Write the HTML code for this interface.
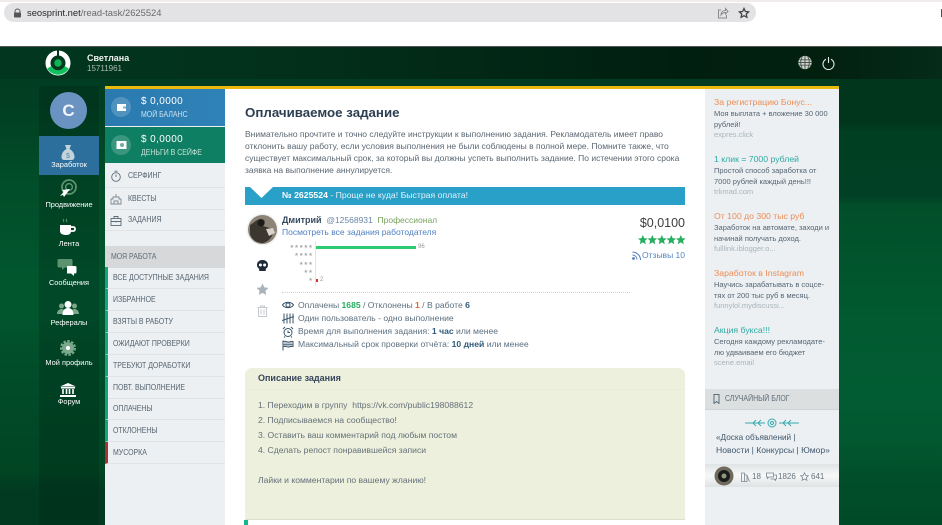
<!DOCTYPE html>
<html lang="ru"><head><meta charset="utf-8"><title>Оплачиваемое задание</title>
<style>
html,body{margin:0;padding:0}
body{width:942px;height:525px;overflow:hidden;position:relative;background:#fff;font-family:"Liberation Sans","DejaVu Sans",sans-serif;color:#566573}
#p{position:absolute;left:0;top:0;width:942px;height:525px;overflow:hidden;filter:blur(.3px)}
.a{position:absolute;white-space:nowrap}
.nav{position:absolute;left:39px;width:60px;text-align:center;color:#fff;font-size:7.400px;line-height:10px}
.nav svg{position:absolute;left:18px;top:-24px}
.m{position:absolute;left:105px;width:120px;height:21px;border-bottom:1px solid #e0e4e6;font-size:8px;line-height:21px;color:#55626f}
.m span{position:absolute;left:8px;white-space:nowrap;transform:scaleX(.87);transform-origin:0 50%}
.w{border-left:3px solid #12a57f;width:117px}
.w span{left:5px}
.sx{transform:scaleX(.87);transform-origin:0 50%}
.ic{position:absolute;left:282px}
.ad{position:absolute;left:714px;width:120px}
.ad b{display:block;font-weight:normal;font-size:8.700px;line-height:11px;white-space:nowrap}
.ad p{margin:1px 0 0;font-size:7.500px;line-height:10.500px;color:#566573;white-space:nowrap}
.ad i{display:block;font-style:normal;font-size:7.500px;line-height:10.500px;color:#aab4bb}
.o{color:#ee8c55}.t{color:#2fa9a5}
.l{position:absolute;left:258px;font-size:8.600px;line-height:11px;color:#65707a;white-space:nowrap}
.r{position:absolute;left:298px;font-size:8.600px;line-height:11px;color:#5c7080;white-space:nowrap}
.r b{color:#2c5a78}
</style></head><body><div id="p">

<!-- browser chrome -->
<div class="a" style="left:0;top:0;width:942px;height:2px;background:#f1ecec"></div>
<div class="a" style="left:4px;top:3px;width:752px;height:19px;border-radius:10px;background:#e3e3e5"></div>
<svg class="a" style="left:13px;top:8px" width="9" height="10" viewBox="0 0 9 10"><path d="M2 5V3.500a2.500 2.500 0 0 1 5 0V5" fill="none" stroke="#555" stroke-width="1"/><rect x="1" y="4.500" width="7" height="5" rx="1" fill="#555"/></svg>
<div class="a" style="left:27px;top:6px;font-size:9.400px;line-height:14px;color:#6a6a6e"><span style="color:#26282b">seosprint.net</span>/read-task/2625524</div>
<svg class="a" style="left:717px;top:7px" width="12" height="12" viewBox="0 0 12 12" fill="none" stroke="#8b8b8e" stroke-width="1"><path d="M4 3H1.500v8h8V8M4 8c0-3 2-4.500 4.500-4.500V1.500L11 4.500 8.500 7V5.500C6.500 5.500 5 6.500 4 8z"/></svg>
<svg class="a" style="left:738px;top:7px" width="12" height="12" viewBox="0 0 24 24" fill="none" stroke="#444" stroke-width="2.600"><path d="M12 3l2.800 6 6.500.8-4.800 4.400 1.300 6.400-5.800-3.200-5.800 3.200 1.300-6.400L2.700 9.800 9.200 9z"/></svg>
<div class="a" style="left:941px;top:9px;width:1px;height:8px;background:#555"></div>

<!-- background strips -->
<div class="a" style="left:0;top:46px;width:105px;height:479px;background:linear-gradient(180deg,#013d21 33px,#013f22 60px,#014d29 130px,#01562e 230px,#01562e 270px,#014e2a 310px,#014826 380px,#014523 425px,#013a20 445px,#013a20 479px)"></div>
<div class="a" style="left:105px;top:46px;width:734px;height:479px;background:#013b20"></div>
<div class="a" style="left:839px;top:46px;width:103px;height:479px;background:linear-gradient(180deg,#01351c 33px,#01351c 75px,#013f22 85px,#014024 150px,#014f2a 160px,#01532c 200px,#015a30 275px,#025c33 350px,#02572f 400px,#014e2a 430px,#014a28 479px)"></div>
<div class="a" style="left:0;top:46px;width:942px;height:33px;background:linear-gradient(90deg,#02371f,#02301b 30%,#011f11 72%,#03200f 88%,#042c18);border-top:1px solid #555;box-sizing:border-box"></div>

<!-- logo -->
<svg class="a" style="left:45px;top:50px" width="26" height="26" viewBox="0 0 26 26">
<circle cx="13" cy="13" r="10" fill="none" stroke="#fff" stroke-width="5"/>
<path d="M2.200 18.500A12.500 12.500 0 0 0 23.800 18.500L19.500 16A7.500 7.500 0 0 1 6.500 16Z" fill="#0fc25f"/>
<rect x="12" y="0" width="2" height="6" fill="#03391f"/>
<circle cx="13" cy="13" r="7.200" fill="#03391f"/>
<circle cx="13" cy="13" r="3.700" fill="#0fb456"/>
</svg>
<div class="a" style="left:87px;top:52px;font-size:9px;line-height:12px;font-weight:bold;color:#f0f2f0">Светлана</div>
<div class="a" style="left:87px;top:63px;font-size:8px;line-height:11px;color:#a9bcae">15711961</div>

<!-- header right icons -->
<svg class="a" style="left:798px;top:55px" width="14" height="15" viewBox="0 0 13 14"><circle cx="6.500" cy="7" r="6.200" fill="#cfd4cf"/><path d="M1 4.500h11M.5 7h12M1 9.500h11M4 1.500c-2 3-2 8 0 11M9 1.500c2 3 2 8 0 11M6.500 1v12" stroke="#49554c" stroke-width=".9" fill="none"/></svg>
<svg class="a" style="left:822px;top:56px" width="13" height="14" viewBox="0 0 13 14" fill="none" stroke="#e8ece8" stroke-width="1.100"><path d="M4 3.200a5.500 5.500 0 1 0 5 0M6.500 1v6"/></svg>

<!-- left sidebar -->
<div class="a" style="left:39px;top:86px;width:60px;height:439px;background:rgba(0,30,15,.24)"></div>
<div class="a" style="left:50px;top:92px;width:37px;height:37px;border-radius:50%;background:#6b93c2;color:#f2f5fa;font-size:17px;line-height:37px;text-align:center;font-weight:bold">C</div>
<div class="a" style="left:39px;top:136px;width:60px;height:39px;background:#2c6e9c"></div>

<div class="nav" style="top:160px"><svg width="22" height="22" viewBox="0 0 22 22" style="top:-18px"><path d="M8 3h6l-1.500 4c3 1.500 5 4.500 5 8 0 2-1.500 3-3 3H7.500c-1.500 0-3-1-3-3 0-3.500 2-6.500 5-8z" fill="#c3d4dd"/><text x="11" y="16" font-size="7" text-anchor="middle" fill="#5b8aa8" font-family="Liberation Sans">$</text></svg>Заработок</div>

<div class="nav" style="top:200px"><svg width="22" height="22" viewBox="0 0 22 22" style="top:-22px"><circle cx="12" cy="9" r="7" fill="none" stroke="#5c9270" stroke-width="1.800"/><circle cx="12" cy="9" r="3.400" fill="none" stroke="#5c9270" stroke-width="1.500"/><path d="M3 18l3-1 1 2 6-8-8 1 1.500 2z" fill="#fff"/></svg>Продвижение</div>

<div class="nav" style="top:239px"><svg width="22" height="24" viewBox="0 0 22 24" style="top:-21px"><path d="M6 1c1 1 0 2 1 3M9 1c1 1 0 2 1 3" stroke="#5c9270" stroke-width="1" fill="none"/><path d="M3 7h11v6c0 3-2 4-5 4s-6-1-6-4z" fill="#fff"/><path d="M14 9h2.500c2 0 2 4 0 4H14" stroke="#fff" stroke-width="1.800" fill="none"/></svg>Лента</div>

<div class="nav" style="top:278px"><svg width="22" height="22" viewBox="0 0 22 22" style="top:-21px"><path d="M2 2h12c1 0 1.500 .5 1.500 1.500V9c0 1-.5 1.500-1.500 1.500H8L5 13v-2.500H2C1 10.500.5 10 .5 9V3.500C.5 2.500 1 2 2 2z" fill="#5c9270"/><path d="M10 9h8c1 0 1.500 .5 1.500 1.500V15c0 1-.5 1.500-1.500 1.500h-1V19l-3-2.500h-4z" fill="#fff"/></svg>Сообщения</div>

<div class="nav" style="top:318px"><svg width="22" height="18" viewBox="0 0 22 18" style="top:-18px"><circle cx="4.500" cy="6" r="2.500" fill="#7aa88a"/><circle cx="17.500" cy="6" r="2.500" fill="#7aa88a"/><path d="M0 14c0-3 2-5 4.500-5s3 1 3 5zM22 14c0-3-2-5-4.500-5s-3 1-3 5z" fill="#7aa88a"/><circle cx="11" cy="4.500" r="3.500" fill="#fff"/><path d="M5.500 15c0-5 2.500-7 5.500-7s5.500 2 5.500 7z" fill="#fff"/></svg>Рефералы</div>

<div class="nav" style="top:358px"><svg width="22" height="18" viewBox="0 0 22 18" style="top:-18px"><circle cx="11" cy="8" r="6" fill="#7aa88a"/><circle cx="11" cy="8" r="7" fill="none" stroke="#7aa88a" stroke-width="2" stroke-dasharray="2.500 1.500"/><circle cx="11" cy="8" r="2" fill="#fff"/></svg>Мой профиль</div>

<div class="nav" style="top:397px"><svg width="22" height="16" viewBox="0 0 22 16" style="top:-15px"><path d="M11 1 19 4.500H3z" fill="#fff"/><rect x="4" y="5" width="14" height="1.500" fill="#fff"/><path d="M6 7v5M9.500 7v5M12.500 7v5M16 7v5" stroke="#fff" stroke-width="1.600"/><rect x="3" y="13" width="16" height="2" fill="#fff"/></svg>Форум</div>

<!-- top yellow bar -->
<div class="a" style="left:105px;top:86px;width:734px;height:3px;background:#e9b90d"></div>

<!-- left column -->
<div class="a" style="left:105px;top:89px;width:120px;height:436px;background:#ecf0f2"></div>
<div class="a" style="left:105px;top:89px;width:120px;height:37px;background:linear-gradient(90deg,#2a7ab0,#2f82b7)"></div>
<div class="a" style="left:105px;top:127px;width:120px;height:36px;background:#0f7f63"></div>
<div class="a" style="left:111px;top:97px;width:20px;height:20px;border-radius:50%;background:rgba(255,255,255,.18)"></div>
<div class="a" style="left:111px;top:135px;width:20px;height:20px;border-radius:50%;background:rgba(255,255,255,.18)"></div>
<svg class="a" style="left:116px;top:102px" width="11" height="10" viewBox="0 0 11 10"><path d="M1 2h9v7H1z" fill="#fff"/><rect x="7" y="4.500" width="3" height="2" fill="#7fb0d0"/></svg>
<svg class="a" style="left:116px;top:140px" width="11" height="10" viewBox="0 0 11 10"><rect x=".5" y="1" width="10" height="8" fill="#fff"/><circle cx="6" cy="5" r="2" fill="#73ae9b"/></svg>
<div class="a" style="left:141px;top:95px;font-size:10px;line-height:13px;color:#fff;letter-spacing:.4px">$ 0,0000</div>
<div class="a sx" style="left:141px;top:110px;font-size:8px;line-height:10px;color:#cfe2ef">МОЙ БАЛАНС</div>
<div class="a" style="left:141px;top:133px;font-size:10px;line-height:13px;color:#fff;letter-spacing:.4px">$ 0,0000</div>
<div class="a sx" style="left:141px;top:148px;font-size:8px;line-height:10px;color:#c7e3da">ДЕНЬГИ В СЕЙФЕ</div>

<div class="m" style="top:165px;height:22px;line-height:22px"><span style="left:23px">СЕРФИНГ</span></div>
<div class="m" style="top:188px;height:21px;line-height:21px"><span style="left:23px">КВЕСТЫ</span></div>
<div class="m" style="top:210px;height:20px;line-height:20px"><span style="left:23px">ЗАДАНИЯ</span></div>
<svg class="a" style="left:110px;top:170px" width="12" height="12" viewBox="0 0 12 12" fill="none" stroke="#5d6b78" stroke-width=".9"><circle cx="6" cy="7" r="4.300"/><path d="M4.500 1.200h3M6 7V4.500"/></svg>
<svg class="a" style="left:110px;top:193px" width="12" height="12" viewBox="0 0 12 12" fill="none" stroke="#7d8a95" stroke-width=".9"><path d="M1 11V6h2V4h6v2h2v5zM4 11V8h4v3M6 4V1"/></svg>
<svg class="a" style="left:110px;top:215px" width="12" height="12" viewBox="0 0 12 12" fill="none" stroke="#5d6b78" stroke-width=".9"><rect x="1" y="3.500" width="10" height="7"/><path d="M4 3.500V1.500h4v2M1 6.500h10M6 6v1.500"/></svg>

<div class="a" style="left:105px;top:246px;width:120px;height:22px;background:#d6d8d9"></div>
<div class="a sx" style="left:111px;top:246px;font-size:8px;line-height:22px;color:#5d6b78">МОЯ РАБОТА</div>

<div class="m w" style="top:267px"><span>ВСЕ ДОСТУПНЫЕ ЗАДАНИЯ</span></div>
<div class="m w" style="top:289px"><span>ИЗБРАННОЕ</span></div>
<div class="m w" style="top:311px"><span>ВЗЯТЫ В РАБОТУ</span></div>
<div class="m w" style="top:333px"><span>ОЖИДАЮТ ПРОВЕРКИ</span></div>
<div class="m w" style="top:355px"><span>ТРЕБУЮТ ДОРАБОТКИ</span></div>
<div class="m w" style="top:377px"><span>ПОВТ. ВЫПОЛНЕНИЕ</span></div>
<div class="m w" style="top:398px"><span>ОПЛАЧЕНЫ</span></div>
<div class="m w" style="top:420px"><span>ОТКЛОНЕНЫ</span></div>
<div class="m w" style="top:442px;border-left-color:#a8322e"><span>МУСОРКА</span></div>

<!-- main -->
<div class="a" style="left:225px;top:89px;width:480px;height:436px;background:#fff"></div>
<div class="a" style="left:245px;top:104px;font-size:13.300px;line-height:17px;font-weight:bold;color:#2c3e50">Оплачиваемое задание</div>
<div class="a" style="left:245px;top:128px;font-size:8.500px;line-height:12px;color:#5a6773">Внимательно прочтите и точно следуйте инструкции к выполнению задания. Рекламодатель имеет право<br>отклонить вашу работу, если условия выполнения не были соблюдены в полной мере. Помните также, что<br>существует максимальный срок, за который вы должны успеть выполнить задание. По истечении этого срока<br>заявка на выполнение аннулируется.</div>

<div class="a" style="left:245px;top:187px;width:440px;height:18px;background:#29a0c8"></div>
<svg class="a" style="left:250px;top:187px" width="23" height="11" viewBox="0 0 23 11"><path d="M0 0h23L11.500 11z" fill="#fff"/></svg>
<div class="a" style="left:282px;top:189px;font-size:8.700px;line-height:12px;color:#e3f3f9"><b style="color:#fff">№ 2625524</b> - Проще не куда! Быстрая оплата!</div>

<!-- avatar -->
<svg class="a" style="left:246px;top:213px" width="33" height="33" viewBox="0 0 33 33"><circle cx="16.500" cy="16.500" r="16" fill="#f1f1f1"/><circle cx="16.500" cy="16.500" r="14.500" fill="#8d8377"/><path d="M4 12c4-2 8-7 12-6s3 5 1 7l10 3c1 6-3 12-10 14-6 0-11-3-13-9z" fill="#3c3630"/><circle cx="15" cy="10" r="3.500" fill="#1f1b18"/><path d="M20 16l7-1 2 5-6 3z" fill="#d9d3c9"/></svg>

<div class="a" style="left:282px;top:214px;font-size:8.500px;line-height:12px"><b style="color:#34495e;font-size:9px">Дмитрий</b> &nbsp;<span style="color:#6a86a8">@12568931</span> &nbsp;<span style="color:#78a25c">Профессионал</span></div>
<div class="a" style="left:282px;top:226px;font-size:8.500px;line-height:12px;color:#4f7fc0">Посмотреть все задания работодателя</div>

<!-- rating chart -->
<div class="a" style="left:315px;top:241px;width:1px;height:45px;background:#e4e4e4"></div>
<div class="a" style="left:283px;top:243px;width:30px;text-align:right;font-size:5px;line-height:8.300px;color:#a6a6a6;letter-spacing:.2px">★★★★★<br>★★★★<br>★★★<br>★★<br>★</div>
<div class="a" style="left:316px;top:246px;width:100px;height:3px;background:#2ecc71"></div>
<div class="a" style="left:418px;top:244px;font-size:6px;line-height:7px;color:#999">96</div>
<div class="a" style="left:316px;top:279px;width:2px;height:3px;background:#d9342b"></div>
<div class="a" style="left:320px;top:277px;font-size:6px;line-height:7px;color:#999">2</div>

<!-- side action icons -->
<svg class="a" style="left:256px;top:259px" width="13" height="13" viewBox="0 0 13 13"><path d="M6.500 1C3 1 1 3.200 1 6c0 2 1 3 2.200 3.700V12h6.600V9.700C11 9 12 8 12 6c0-2.800-2-5-5.500-5z" fill="#1e2a38"/><circle cx="4.400" cy="6" r="1.500" fill="#fff"/><circle cx="8.600" cy="6" r="1.500" fill="#fff"/></svg>
<svg class="a" style="left:256px;top:283px" width="13" height="13" viewBox="0 0 24 24"><path d="M12 1l3.400 7 7.600 1-5.500 5.300L18.800 22 12 18.200 5.200 22l1.300-7.700L1 9l7.600-1z" fill="#a9b3ba"/></svg>
<svg class="a" style="left:257px;top:305px" width="11" height="12" viewBox="0 0 11 12" fill="none" stroke="#c3c9ce" stroke-width="1"><path d="M.5 2.500h10M3.500 2.500V1h4v1.500M1.500 2.500V11.500h8V2.500M4 4.500v5M7 4.500v5"/></svg>

<div class="a" style="left:282px;top:292px;width:348px;border-top:1px dotted #cfd3d6"></div>

<!-- stats -->
<svg class="ic" style="top:300px" width="12" height="10" viewBox="0 0 12 10" fill="none" stroke="#3a566c" stroke-width="1.100"><path d="M.5 5C2.500 1.500 9.500 1.500 11.500 5 9.500 8.500 2.500 8.500.5 5z"/><circle cx="6" cy="5" r="2"/></svg>
<svg class="ic" style="top:313px" width="12" height="11" viewBox="0 0 12 11" fill="none" stroke="#3a566c" stroke-width="1"><path d="M2 .5v10M5 .5v10M8 .5v10M11 .5v10M0 7.500 12 3.500"/></svg>
<svg class="ic" style="top:326px" width="12" height="12" viewBox="0 0 12 12" fill="none" stroke="#3a566c" stroke-width="1"><circle cx="6" cy="6.500" r="4"/><path d="M6 4.500v2h2M1 3l2-2M11 3 9 1M3 10.500l-1 1M9 10.500l1 1"/></svg>
<svg class="ic" style="top:340px" width="12" height="11" viewBox="0 0 12 11" fill="none" stroke="#3a566c" stroke-width="1"><path d="M1 .5v10M1 1.500c3-1 4 1 6 .5s2-1 4-.5v5c-2-.5-2 0-4 .5s-3-1.500-6-.5z"/><path d="M3 2v5M5 2v5M7 2v5M9 2v5M1 4.300h10" stroke-width=".7"/></svg>

<div class="r" style="top:300px">Оплачены <b style="color:#27ae60">1685</b> / Отклонены <b style="color:#e4683a">1</b> / В работе <b>6</b></div>
<div class="r" style="top:313px">Один пользователь - одно выполнение</div>
<div class="r" style="top:326px">Время для выполнения задания: <b>1 час</b> или менее</div>
<div class="r" style="top:339px">Максимальный срок проверки отчёта: <b>10 дней</b> или менее</div>

<!-- price -->
<div class="a" style="right:257px;top:215px;font-size:12.500px;line-height:17px;color:#3d3d3d">$0,0100</div>
<svg class="a" style="left:638px;top:235px" width="48" height="10" viewBox="0 0 48 10" fill="#27ae60"><path d="M4.800 0l1.400 3.200 3.400.3-2.600 2.300.8 3.400-3-1.800-3 1.800.8-3.400L0 3.500l3.400-.3z"/><path transform="translate(9.500)" d="M4.800 0l1.400 3.200 3.400.3-2.600 2.300.8 3.400-3-1.800-3 1.800.8-3.400L0 3.500l3.400-.3z"/><path transform="translate(19)" d="M4.800 0l1.400 3.200 3.400.3-2.600 2.300.8 3.400-3-1.800-3 1.800.8-3.400L0 3.500l3.400-.3z"/><path transform="translate(28.500)" d="M4.800 0l1.400 3.200 3.400.3-2.600 2.300.8 3.400-3-1.800-3 1.800.8-3.400L0 3.500l3.400-.3z"/><path transform="translate(38)" d="M4.800 0l1.400 3.200 3.400.3-2.600 2.300.8 3.400-3-1.800-3 1.800.8-3.400L0 3.500l3.400-.3z"/></svg>
<svg class="a" style="left:632px;top:251px" width="9" height="9" viewBox="0 0 9 9" fill="none" stroke="#4f7fc0" stroke-width="1"><circle cx="1.500" cy="7.500" r=".9" fill="#4f7fc0"/><path d="M.5 4a4.500 4.500 0 0 1 4.500 4.500M.5 1a8 8 0 0 1 8 8"/></svg>
<div class="a" style="right:257px;top:250px;font-size:8.500px;line-height:11px;color:#5686c4">Отзывы 10</div>

<!-- description -->
<div class="a" style="left:245px;top:368px;width:440px;height:151px;border-radius:7px 7px 0 0;background:#edf0dc"></div>
<div class="a" style="left:245px;top:389px;width:440px;height:1px;background:#e9ecd9"></div>
<div class="a" style="left:258px;top:373px;font-size:9px;line-height:11px;font-weight:bold;color:#36455a">Описание задания</div>
<div class="l" style="top:400px">1. Переходим в группу &nbsp;https://vk.com/public198088612</div>
<div class="l" style="top:415px">2. Подписываемся на сообщество!</div>
<div class="l" style="top:430px">3. Оставить ваш комментарий под любым постом</div>
<div class="l" style="top:445px">4. Сделать репост понравившейся записи</div>
<div class="l" style="top:475px">Лайки и комментарии по вашему жланию!</div>
<div class="a" style="left:245px;top:519px;width:440px;height:6px;background:#fff;border-top:1px solid #dcdfcb;box-sizing:border-box"></div>
<div class="a" style="left:244px;top:520px;width:4px;height:5px;background:#12b98a"></div>

<!-- right column -->
<div class="a" style="left:705px;top:89px;width:134px;height:436px;background:#ecf0f2"></div>
<div class="ad" style="top:97px"><b class="o">За регистрацию Бонус...</b><p>Моя выплата + вложение 30 000<br>рублей!</p><i>expres.click</i></div>
<div class="ad" style="top:154px"><b class="t">1 клик = 7000 рублей</b><p>Простой способ заработка от<br>7000 рублей каждый день!!!</p><i>trkmad.com</i></div>
<div class="ad" style="top:211px"><b class="o">От 100 до 300 тыс руб</b><p>Заработок на автомате, заходи и<br>начинай получать доход.</p><i>fulllink.iblogger.o...</i></div>
<div class="ad" style="top:268px"><b class="o">Заработок в Instagram</b><p>Научись зарабатывать в соцсе-<br>тях от 200 тыс руб в месяц.</p><i>funnylol.mydiscussi...</i></div>
<div class="ad" style="top:325px"><b class="t">Акция букса!!!</b><p>Сегодня каждому рекламодате-<br>лю удваиваем его бюджет</p><i>scene.email</i></div>

<div class="a" style="left:705px;top:389px;width:134px;height:20px;background:#dcdfe0;border-bottom:1px solid #cfd3d4"></div>
<div class="a sx" style="left:725px;top:389px;font-size:8px;line-height:20px;color:#5d6b78">СЛУЧАЙНЫЙ БЛОГ</div>
<svg class="a" style="left:713px;top:394px" width="7" height="10" viewBox="0 0 7 10" fill="none" stroke="#5d6b78" stroke-width="1"><path d="M1 .5h5v9L3.500 7.500 1 9.500z"/></svg>
<svg class="a" style="left:745px;top:417px" width="54" height="12" viewBox="0 0 54 12" fill="none" stroke="#37abb0" stroke-width="1"><circle cx="27" cy="6" r="4"/><circle cx="27" cy="6" r="1.500"/><path d="M0 6h20M34 6h20M8 6l3-3M13 6l3-3M8 6l3 3M13 6l3 3M38 6l3-3M43 6l3-3M38 6l3 3M43 6l3 3"/></svg>
<div class="a" style="left:716px;top:432px;font-size:8.200px;line-height:12px;color:#40566e">«Доска объявлений |</div>
<div class="a" style="left:716px;top:444px;font-size:8.600px;line-height:12px;color:#40566e">Новости | Конкурсы | Юмор»</div>
<div class="a" style="left:705px;top:464px;width:134px;height:23px;background:linear-gradient(#e0e3e4,#f7f8f8 50%,#dfe2e3)"></div>
<svg class="a" style="left:714px;top:466px" width="20" height="20" viewBox="0 0 20 20"><circle cx="10" cy="10" r="9.500" fill="#6f6a5d"/><circle cx="10" cy="10" r="6" fill="#1b1b1b"/><circle cx="10" cy="10" r="2.500" fill="#8e9a7f"/></svg>
<svg class="a" style="left:741px;top:472px" width="9" height="10" viewBox="0 0 9 10" fill="none" stroke="#7b8791" stroke-width=".8"><path d="M.5 9.500V1h3v8.500zM3.500 9.500V3h2.500v6.500zM6 3.500l2.500 6"/></svg>
<div class="a" style="left:752px;top:471px;font-size:8px;line-height:11px;color:#66737e">18</div>
<svg class="a" style="left:766px;top:472px" width="11" height="9" viewBox="0 0 11 9" fill="none" stroke="#7b8791" stroke-width=".8"><path d="M.5 1h7v4H3L1.500 6.500V5h-1zM8 3h2.500v4h-1v1.500L8 7H4.500"/></svg>
<div class="a" style="left:778px;top:471px;font-size:8px;line-height:11px;color:#66737e">1826</div>
<svg class="a" style="left:800px;top:472px" width="9" height="9" viewBox="0 0 24 24" fill="none" stroke="#7b8791" stroke-width="2"><path d="M12 2l3 7 7.500.8-5.600 5 1.600 7.500L12 18.500 5.500 22.300l1.600-7.500-5.600-5L9 9z"/></svg>
<div class="a" style="left:811px;top:471px;font-size:8px;line-height:11px;color:#66737e">641</div>
</div></body></html>
